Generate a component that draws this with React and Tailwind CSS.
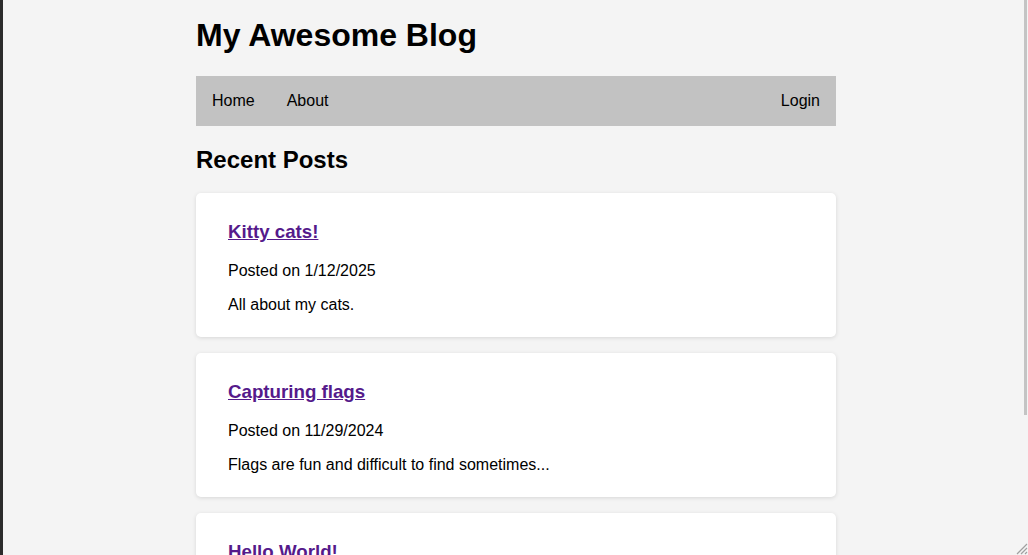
import React from "react";

const posts = [
  { title: "Kitty cats!", date: "1/12/2025", summary: "All about my cats." },
  { title: "Capturing flags", date: "11/29/2024", summary: "Flags are fun and difficult to find sometimes..." },
  { title: "Hello World!", date: "1/1/2024", summary: "My first post." },
];

const PostCard = ({ post }) => {
  return (
    <div className="bg-white rounded-[5px] shadow-[0_1px_4px_rgba(0,0,0,0.12)] pt-[28px] pb-[23px] px-8 mb-4">
      <h3 className="text-[18.72px] leading-[22px] font-bold mb-[19px]">
        <a href="#" className="text-[#551a8b] underline">
          {post.title}
        </a>
      </h3>
      <p className="text-base leading-[18px] mb-4">Posted on {post.date}</p>
      <p className="text-base leading-[18px]">{post.summary}</p>
    </div>
  );
};

const App = () => {
  return (
    <div className="relative flex h-[555px] w-[1028px] overflow-hidden bg-[#f4f4f4] text-black font-['Liberation_Sans',Arial,sans-serif]">
      <div className="w-[3px] shrink-0 bg-[#2b2b2b]" />
      <div className="flex-1 pl-[193px]">
        <div className="w-[640px]">
          <h1 className="text-[32px] leading-[37px] font-bold mt-[17px] mb-[22px]">My Awesome Blog</h1>
          <nav className="flex items-center h-[50px] bg-[#c2c2c2] text-base leading-[18px]">
            <a href="#" className="px-4">Home</a>
            <a href="#" className="px-4">About</a>
            <a href="#" className="px-4 ml-auto">Login</a>
          </nav>
          <h2 className="text-2xl leading-[28px] font-bold mt-[20px] mb-[19px]">Recent Posts</h2>
          {posts.map((post) => (
            <PostCard key={post.title} post={post} />
          ))}
        </div>
      </div>
      <div className="w-[4px] shrink-0">
        <div className="h-[415px] w-[3px] bg-[#c4c4c4]" />
      </div>
      <svg className="absolute right-0 bottom-0" width="14" height="14" viewBox="0 0 14 14">
        <path d="M13 3 L3 13 M13 7 L7 13 M13 11 L11 13" stroke="#a0a0a0" strokeWidth="1.2" fill="none" />
      </svg>
    </div>
  );
};

export default App;
